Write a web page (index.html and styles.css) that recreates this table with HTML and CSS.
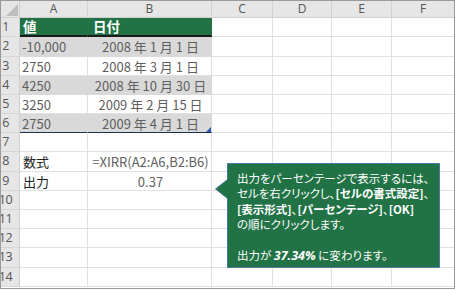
FILE: index.html
```html
<!DOCTYPE html>
<html lang="ja">
<head>
<meta charset="utf-8">
<link rel="stylesheet" href="styles.css">
</head>
<body>
<div class="sheet">
  <div class="grid">
    <div class="corner"><span class="tri"></span></div>
    <div class="ch">A</div><div class="ch">B</div><div class="ch">C</div><div class="ch">D</div><div class="ch">E</div><div class="ch ch-last">F</div>

    <div class="rh">1</div>
    <div class="c hdr hdr-a">値</div><div class="c hdr hdr-b">日付</div>
    <div class="c"></div><div class="c"></div><div class="c"></div><div class="c"></div>

    <div class="rh">2</div>
    <div class="c band va">-10,000</div><div class="c band vb">2008 年 1 月 1 日</div>
    <div class="c"></div><div class="c"></div><div class="c"></div><div class="c"></div>

    <div class="rh">3</div>
    <div class="c va">2750</div><div class="c vb">2008 年 3 月 1 日</div>
    <div class="c"></div><div class="c"></div><div class="c"></div><div class="c"></div>

    <div class="rh">4</div>
    <div class="c band va">4250</div><div class="c band vb">2008 年 10 月 30 日</div>
    <div class="c"></div><div class="c"></div><div class="c"></div><div class="c"></div>

    <div class="rh">5</div>
    <div class="c va">3250</div><div class="c vb">2009 年 2 月 15 日</div>
    <div class="c"></div><div class="c"></div><div class="c"></div><div class="c"></div>

    <div class="rh">6</div>
    <div class="c band va last">2750</div><div class="c band vb last">2009 年 4 月 1 日<span class="handle"></span></div>
    <div class="c"></div><div class="c"></div><div class="c"></div><div class="c"></div>

    <div class="rh">7</div>
    <div class="c"></div><div class="c"></div>
    <div class="c"></div><div class="c"></div><div class="c"></div><div class="c"></div>

    <div class="rh">8</div>
    <div class="c lbl">数式</div><div class="c vb">=XIRR(A2:A6,B2:B6)</div>
    <div class="c"></div><div class="c"></div><div class="c"></div><div class="c"></div>

    <div class="rh">9</div>
    <div class="c lbl">出力</div><div class="c vb">0.37</div>
    <div class="c"></div><div class="c"></div><div class="c"></div><div class="c"></div>

    <div class="rh">10</div>
    <div class="c"></div><div class="c"></div>
    <div class="c"></div><div class="c"></div><div class="c"></div><div class="c"></div>

    <div class="rh">11</div>
    <div class="c"></div><div class="c"></div>
    <div class="c"></div><div class="c"></div><div class="c"></div><div class="c"></div>

    <div class="rh">12</div>
    <div class="c"></div><div class="c"></div>
    <div class="c"></div><div class="c"></div><div class="c"></div><div class="c"></div>

    <div class="rh">13</div>
    <div class="c"></div><div class="c"></div>
    <div class="c"></div><div class="c"></div><div class="c"></div><div class="c"></div>

    <div class="rh">14</div>
    <div class="c"></div><div class="c"></div>
    <div class="c"></div><div class="c"></div><div class="c"></div><div class="c"></div>
  </div>

  <div class="callout">
    <svg class="callout-shape" width="230" height="110" viewBox="0 0 230 110">
      <polygon points="12.5,0.5 224.5,0.5 224.5,104.5 12.5,104.5 12.5,35.5 0.5,26 12.5,16.5" fill="#217346" stroke="#4a78a6" stroke-width="1"/>
    </svg>
    <p class="callout-text">出力をパーセンテージで表示するには、<br>セルを右クリックし、<b>[セルの書式設定]</b>、<br><b>[表示形式]</b>、<b>[パーセンテージ]</b>、<b>[OK]</b><br>の順にクリックします。<br><br>出力が <b><i>37.34%</i></b> に変わります。</p>
  </div>
</div>
</body>
</html>
```

FILE: styles.css
```css
* { box-sizing: border-box; }
html, body { margin: 0; padding: 0; background: #fff; }
body { font-family: "Noto Sans CJK JP", "Noto Sans", sans-serif; }

.sheet {
  position: relative;
  width: 455px;
  height: 289px;
  border: 1px solid #9a9a9a;
  overflow: hidden;
}

.grid {
  display: grid;
  grid-template-columns: 19px 68px 124px 61px 59px 60px 62px;
  grid-template-rows: 17px 19px 20px 19px 19px 19px 19px 19px 20px 19px 19px 19px 19px 20px 19px;
  font-size: 13px;
  color: #5f5f5f;
}

.corner {
  position: relative;
  background: #e6e6e6;
  border-right: 1px solid #cfcfcf;
  border-bottom: 1px solid #cfcfcf;
}
.tri {
  position: absolute;
  right: 1px;
  bottom: 1px;
  width: 12px;
  height: 12px;
  background: #bdbdbd;
  clip-path: polygon(100% 0, 100% 100%, 0 100%);
}

.ch {
  background: #e6e6e6;
  border-right: 1px solid #d2d2d2;
  border-bottom: 1px solid #cfcfcf;
  display: flex;
  align-items: center;
  justify-content: center;
  color: #555;
  font-family: "Open Sans", "Noto Sans", sans-serif;
  font-size: 12px;
  line-height: 1;
}
.ch-last { border-right: none; }

.rh {
  background: #e6e6e6;
  border-right: 1px solid #cfcfcf;
  border-bottom: 1px solid #d6d6d6;
  display: flex;
  align-items: center;
  justify-content: center;
  padding-right: 9px;
  color: #555;
  font-family: "Open Sans", "Noto Sans", sans-serif;
  font-size: 12.5px;
  line-height: 1;
  letter-spacing: -0.5px;
}

.c {
  position: relative;
  border-right: 1px solid #e0e0e0;
  border-bottom: 1px solid #e0e0e0;
  display: flex;
  align-items: center;
  white-space: nowrap;
  line-height: 1;
}
.c:nth-child(7n) { border-right: none; }

.hdr {
  background: #217346;
  color: #fff;
  font-weight: bold;
  font-size: 13.5px;
  border-bottom: 2px solid #1a1a1a;
  border-right-color: #217346;
}
.hdr-a { padding-left: 3px; }
.hdr-b { padding-left: 5px; }

.band { background: #d9d9d9; border-right-color: #d9d9d9; border-bottom-color: #d9d9d9; }
.va { padding-left: 2px; }
.vb { justify-content: center; padding-left: 2px; }
.last { border-bottom: 1px solid #1f2f4f; }
.lbl { padding-left: 3px; color: #222; }

.handle {
  position: absolute;
  right: 0;
  bottom: 0;
  width: 5px;
  height: 5px;
  background: #2e58b8;
  clip-path: polygon(100% 0, 100% 100%, 0 100%);
}

.callout {
  position: absolute;
  left: 214px;
  top: 162px;
  width: 230px;
  height: 110px;
}
.callout-shape { position: absolute; left: 0; top: 0; }
.callout-text {
  position: relative;
  margin: 0;
  padding: 8px 0 0 22px;
  color: #fff;
  font-size: 11.5px;
  line-height: 15.4px;
  white-space: nowrap;
  font-feature-settings: "palt" 1;
}
.callout-text b { font-weight: bold; }
.callout-text i { font-family: "Open Sans", "Noto Sans", sans-serif; font-style: italic; font-size: 12.5px; }
```
